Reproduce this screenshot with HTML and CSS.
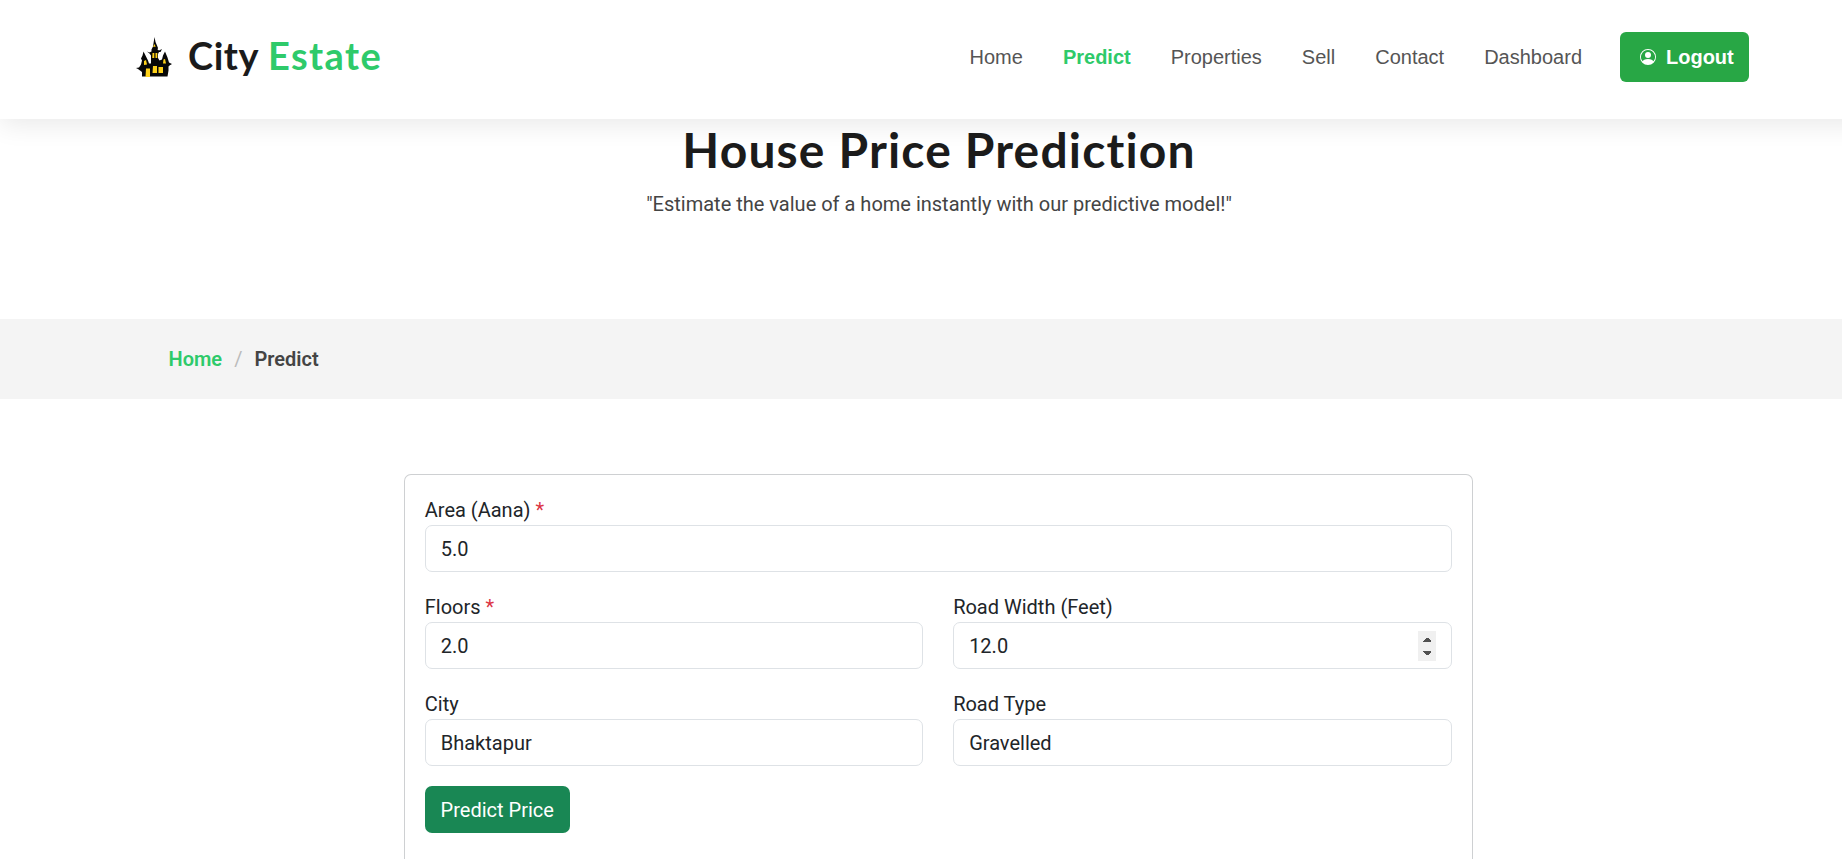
FILE: index.html
```html
<!DOCTYPE html>
<html lang="en">
<head>
<meta charset="utf-8">
<title>City Estate</title>
<link rel="stylesheet" href="styles.css">
</head>
<body>
<header class="navbar">
  <a class="brand">
    <svg class="brand-icon" width="37" height="40" viewBox="0 0 37 40">
      <path fill="#080808" d="M19.500 0l1 5 1.500 3.500 1 2.500-.5 1.500 1.500 1 3-1.500-1.500 3h-1.500l-1 2v4l1.500 2.500 2.500-1 1-4 2-4 2.500 6 1.500 5 3 1.500-2.500 1.500-1 1v4l-1 6H7v-4.500l-4-3-2-1 3-.5 2-3 1-4-1-2 1.500-3 1-4 1.500 3 3 6 1 3h2v-8l-1.500-2-2.500-2 2.500 1 2-1v-2l1.500-3z"/>
      <path fill="#ffd21a" d="M19.500 7l1.200 2.800h-2.700zM17.500 16h1.800v5h-2zM20.500 16h1.800v5h-1.800zM9 24l2-1 1 4.500-3 .5zM28.500 22.500l1.500-.500 1 4.500h-3zM11 31.500h4v8.500h-4.500zM18 29h4v7h-4.500zM23.500 30h4.500v6h-4.500z"/>
    </svg>
    <span class="brand-text"><span class="city">City</span><span class="estate">Estate</span></span>
  </a>
  <nav class="nav">
    <a>Home</a><a class="active">Predict</a><a>Properties</a><a>Sell</a><a>Contact</a><a>Dashboard</a>
  </nav>
  <a class="logout">
    <svg width="16" height="16" viewBox="0 0 16 16" fill="#fff"><path d="M11 6a3 3 0 1 1-6 0 3 3 0 0 1 6 0z"/><path fill-rule="evenodd" d="M0 8a8 8 0 1 1 16 0A8 8 0 0 1 0 8zm8-7a7 7 0 0 0-5.468 11.370C3.242 11.226 4.805 10 8 10s4.757 1.225 5.468 2.370A7 7 0 0 0 8 1z"/></svg>
    <span>Logout</span>
  </a>
</header>
<section class="intro">
  <h1>House Price Prediction</h1>
  <p>"Estimate the value of a home instantly with our predictive model!"</p>
</section>
<div class="breadcrumb"><a>Home</a><span class="slash">/</span><span class="current">Predict</span></div>
<main class="main">
  <form class="card">
    <div class="field wide"><label>Area (Aana) <b>*</b></label><div class="control">5.0</div></div>
    <div class="field"><label>Floors <b>*</b></label><div class="control">2.0</div></div>
    <div class="field"><label>Road Width (Feet)</label><div class="control">12.0
      <svg class="spinner" width="18" height="30" viewBox="0 0 18 30" shape-rendering="crispEdges"><path fill="#f0f0f0" d="M0 0h18v30H0z"/><path fill="#505050" d="M5 11h8v-1l-3-3H8l-3 3zM5 20h8v1l-3 3H8l-3-3z"/></svg></div></div>
    <div class="field"><label>City</label><div class="control">Bhaktapur</div></div>
    <div class="field"><label>Road Type</label><div class="control">Gravelled</div></div>
    <button type="button" class="submit">Predict Price</button>
  </form>
</main>
</body>
</html>
```
FILE: styles.css
```css
* { box-sizing: border-box; }
html, body { height: 859px; overflow: hidden; }
body { display: flex; flex-direction: column; margin: 0; background: #fff; color: #212529; font: 20px/30px Roboto, sans-serif; }
.navbar { position: relative; flex: none; display: flex; align-items: flex-start; width: 1878px; height: 119px; padding: 32px 129px 0 135px; background: #fff; box-shadow: 0 6px 24px rgba(0, 0, 0, .085); }
.brand { display: flex; margin-right: auto; }
.brand-icon { margin-top: 5px; }
.brand-text { display: flex; gap: 9px; margin: -2px 0 0 16px; font: 700 38px/50px Lato, sans-serif; letter-spacing: .5px; color: #1b1b1b; }
.estate { color: #2eca6a; letter-spacing: 1.4px; }
.nav { display: flex; gap: 40px; margin-right: 38px; font: 20px/50px "Liberation Sans", sans-serif; color: #555; }
.active { color: #2eca6a; font-weight: 700; }
.logout { display: flex; align-items: center; gap: 10px; width: 129px; height: 50px; padding-left: 20px; border-radius: 6px; background: #28a745; color: #fff; font: 700 20px/50px "Liberation Sans", sans-serif; }
.intro { position: relative; flex: none; z-index: 1; width: 1878px; height: 200px; text-align: center; color: #1b1b1b; }
h1 { margin: 0; padding-top: 2px; font: 700 48px/58px Lato, sans-serif; letter-spacing: 1.15px; font-variant-ligatures: none; }
.intro p { margin: 10px 0 0; color: #444; }
.breadcrumb { display: flex; flex: none; align-items: center; height: 80px; padding-left: 168.5px; background: #f4f4f4; font-weight: 600; color: #444; }
.breadcrumb a { color: #2eca6a; }
.slash { margin: 0 12px; color: #bbb; font-weight: 400; }
.main { flex: 1; min-height: 0; padding: 75px 0 0 403.75px; }
.card { display: grid; grid-template-columns: 1fr 1fr; column-gap: 30px; row-gap: 20px; width: 1068.75px; height: 100%; align-content: start; padding: 20px 20px 0; border: 1px solid #ced0d2; border-bottom: 0; border-radius: 7px 7px 0 0; }
.wide { grid-column: 1 / -1; }
.field label { display: block; }
.field b { color: #dc3545; font-weight: 400; }
.control { display: flex; align-items: center; justify-content: space-between; height: 47px; padding: 0 15px; border: 1px solid #dee2e6; border-radius: 7px; }
.submit { justify-self: start; width: 145px; height: 47px; padding: 1px 0 0; border: 0; border-radius: 7px; background: #198754; color: #fff; font: 20px/46px Roboto, sans-serif; }
```
